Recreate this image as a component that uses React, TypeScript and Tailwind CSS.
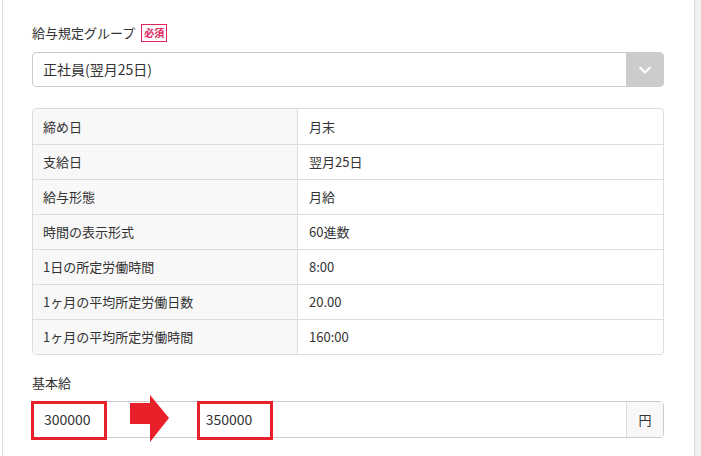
import { ChevronDown } from 'lucide-react';

const rows: [string, string][] = [
  ['締め日', '月末'],
  ['支給日', '翌月25日'],
  ['給与形態', '月給'],
  ['時間の表示形式', '60進数'],
  ['1日の所定労働時間', '8:00'],
  ['1ヶ月の平均所定労働日数', '20.00'],
  ['1ヶ月の平均所定労働時間', '160:00'],
];

const font = { fontFamily: '"Noto Sans CJK JP", "Noto Sans", sans-serif' };

export default function App() {
  return (
    <div className="flex h-[456px] w-[701px] bg-white text-[#333]" style={font}>
      <div className="w-[2px] bg-white" />
      <div className="flex-1 border-x border-[#ddd] pl-[29px] pr-[30px] pt-[23px]">
        {/* 給与規定グループ */}
        <div className="flex h-[20px] items-center gap-[6px] text-[13px]">
          <span>給与規定グループ</span>
          <span className="flex h-[18px] items-center border border-[#e0245e] px-[2px] text-[10px] font-bold leading-none text-[#e0245e]">
            必須
          </span>
        </div>
        <div className="mt-[9px] flex h-[35px] overflow-hidden rounded-[4px] border border-[#ccc]">
          <div className="flex flex-1 items-center pl-[10px] text-[14px]">正社員(翌月25日)</div>
          <div className="flex w-[37px] items-center justify-center bg-[#ccc] text-white">
            <ChevronDown size={20} strokeWidth={2.5} />
          </div>
        </div>

        {/* 規定の内容 */}
        <div className="mt-[21px] overflow-hidden rounded-[4px] border border-[#ddd]">
          {rows.map(([label, value], i) => (
            <div
              key={label}
              className={`flex h-[35px] text-[13px] ${i > 0 ? 'border-t border-[#ddd]' : ''}`}
            >
              <div className="flex w-[265px] items-center border-r border-[#ddd] bg-[#f8f8f8] pl-[10px]">
                {label}
              </div>
              <div className="flex flex-1 items-center pl-[11px]">{value}</div>
            </div>
          ))}
        </div>

        {/* 基本給 */}
        <div className="mt-[18px] text-[13px] leading-[20px]">基本給</div>
        <div className="relative mt-[8px] flex h-[37px] rounded-[4px] border border-[#ccc]">
          <div className="flex flex-1 items-center gap-[115px] pl-[11px] text-[14px]">
            <span>300000</span>
            <span>350000</span>
          </div>
          <div className="flex w-[37px] items-center justify-center border-l border-[#ddd] bg-[#f8f8f8] text-[13px]">
            円
          </div>
          {/* 変更前後の注記 */}
          <div className="absolute left-[-2px] top-[-1px] h-[39px] w-[76px] border-[3px] border-[#e8202a]" />
          <div className="absolute left-[164px] top-[-1px] h-[39px] w-[76px] border-[3px] border-[#e8202a]" />
          <svg className="absolute left-[97px] top-[-7px]" width="40" height="48" viewBox="0 0 40 48">
            <path d="M0 8 H20 V0 L39 23 L20 47 V29 H0 Z" fill="#e8202a" />
          </svg>
        </div>
      </div>
      <div className="w-[6px] bg-[#f0f0f0]" />
    </div>
  );
}
